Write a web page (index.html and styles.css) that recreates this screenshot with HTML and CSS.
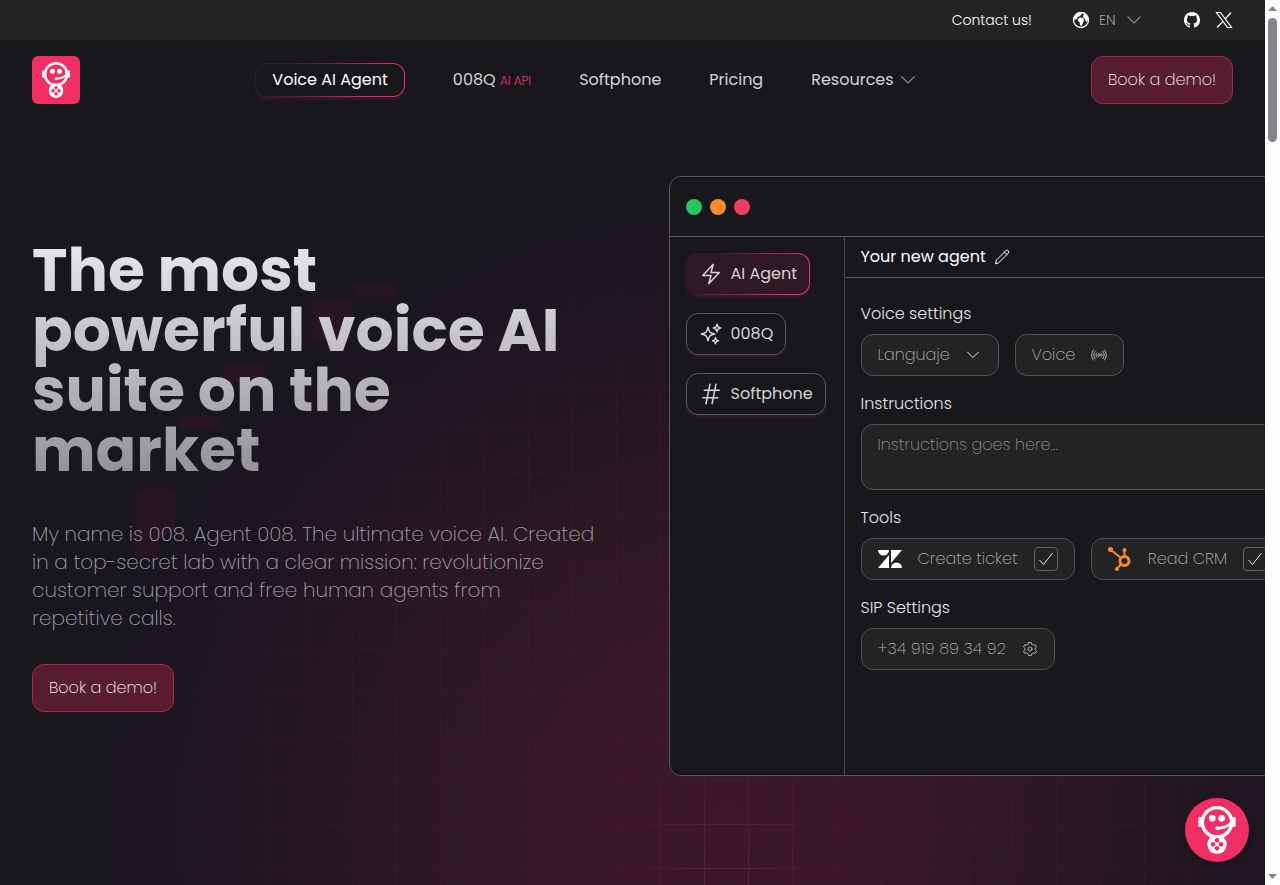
FILE: index.html
```html
<!DOCTYPE html>
<html lang="en">
<head>
  <meta charset="UTF-8">
  <meta name="viewport" content="width=device-width, initial-scale=1">
  <title>008 - Voice AI Agent</title>
  <link rel="stylesheet" href="styles.css">
</head>
<body>

  <!-- mascot, used in the logo and in the chat button -->
  <svg class="defs" width="0" height="0" aria-hidden="true">
    <symbol id="mascot" viewBox="0 0 192 192">
      <g fill="#fff">
        <rect x="40" y="58" width="14" height="28" rx="3"/>
        <rect x="138" y="58" width="14" height="28" rx="3"/>
        <circle cx="82" cy="61" r="10"/>
        <circle cx="110" cy="61" r="10"/>
        <circle cx="97" cy="91" r="6"/>
        <rect x="82" y="112" width="28" height="14"/>
        <circle cx="96" cy="139" r="29"/>
      </g>
      <circle cx="96" cy="73" r="44" fill="none" stroke="#fff" stroke-width="10"/>
      <path d="M139 75C130 84 115 90 97 91" fill="none" stroke="#fff" stroke-width="8"/>
      <g fill="#f22f65">
        <circle cx="96" cy="127" r="7"/>
        <circle cx="96" cy="151" r="7"/>
        <circle cx="84" cy="139" r="7"/>
        <circle cx="108" cy="139" r="7"/>
      </g>
    </symbol>
    <symbol id="chevron" viewBox="0 0 16 16">
      <path d="M1.500 4.500 8 11l6.500-6.500" fill="none" stroke="currentColor" stroke-width="1.200"/>
    </symbol>
  </svg>

  <div class="topbar">
    <a href="#contact" class="contact">Contact us!</a>
    <div class="lang">
      <svg width="18" height="18" viewBox="0 0 18 18">
        <circle cx="9" cy="9" r="7.500" fill="none" stroke="#fff" stroke-width="1.300"/>
        <path d="M2 6.500 4 3l4-1.500 2 .5-.5 1.500-1.500 1.500-2 1-1.500 2-2 1zM6 8l2-1.500 3 .5 1 2-1 3-1.500 3-1.500-1-.5-3-1.500-1zM12 3l3 2 1 3-1 3-1.500-1-.5-2-1.500-1-.5-2z" fill="#fff"/>
      </svg>
      <select class="lang-select" aria-label="Language"><option>EN</option></select>
      <svg class="muted" width="16" height="16"><use href="#chevron"/></svg>
    </div>
    <div class="social">
      <a href="#github" aria-label="GitHub">
        <svg width="16" height="16" viewBox="0 0 16 16" fill="#fff"><path d="M8 0C3.580 0 0 3.580 0 8c0 3.540 2.290 6.530 5.470 7.590.4.070.55-.17.55-.38 0-.19-.01-.82-.01-1.490-2.010.37-2.530-.49-2.690-.94-.09-.23-.48-.94-.82-1.130-.28-.15-.68-.52-.01-.53.63-.01 1.080.58 1.230.82.72 1.210 1.870.87 2.330.66.070-.52.280-.87.510-1.070-1.780-.2-3.640-.89-3.640-3.950 0-.87.310-1.590.82-2.150-.08-.2-.36-1.020.080-2.120 0 0 .67-.21 2.200.82a7.600 7.600 0 0 1 4 0c1.530-1.040 2.200-.82 2.200-.82.44 1.100.16 1.920.080 2.120.51.56.82 1.270.82 2.150 0 3.070-1.870 3.750-3.650 3.950.29.25.54.73.54 1.480 0 1.070-.01 1.930-.01 2.200 0 .21.15.46.55.38A8 8 0 0 0 16 8c0-4.420-3.580-8-8-8z"/></svg>
      </a>
      <a href="#x" aria-label="X">
        <svg width="18" height="18" viewBox="0 0 18 18" fill="none" stroke="#fff" stroke-width="1.200"><path d="M1.500 1.500h4l11 15h-4zM16 1.500 10.200 8M8 10.400 2 16.500"/></svg>
      </a>
    </div>
  </div>

  <header class="header">
    <a href="#home" class="logo" aria-label="Home"><svg width="48" height="48"><use href="#mascot"/></svg></a>
    <nav class="nav">
      <a href="#agent" class="active">Voice AI Agent</a>
      <a href="#008q">008Q <small>AI API</small></a>
      <a href="#softphone">Softphone</a>
      <a href="#pricing">Pricing</a>
      <button type="button">Resources <svg class="muted" width="16" height="16"><use href="#chevron"/></svg></button>
    </nav>
    <button type="button" class="btn">Book a demo!</button>
  </header>

  <main class="hero">
    <svg class="hero-blocks" width="440" height="600" aria-hidden="true">
      <path d="M355 164q20-3 40 1v11h-40zM312 180h40v40h-40zM223 243h40v20h-40zM179 297h40v11h-40zM135 370q20-3 40 0v40q-12 5-16 12 0 8 3 15h-27z"/>
    </svg>

    <div class="hero-text">
      <h1>The most powerful voice AI suite on the market</h1>
      <p>My name is 008. Agent 008. The ultimate voice AI. Created in a top-secret lab with a clear mission: revolutionize customer support and free human agents from repetitive calls.</p>
      <button type="button" class="btn">Book a demo!</button>
    </div>

    <div class="window">
      <div class="window-bar">
        <span class="dot green"></span>
        <span class="dot orange"></span>
        <span class="dot red"></span>
      </div>
      <div class="window-body">
        <div class="sidebar">
          <button type="button" class="tab selected">
            <svg class="icon" width="24" height="24" viewBox="0 0 24 24"><path d="m3.750 13.500 10.500-11.250L12 10.500h8.250L9.750 21.750 12 13.500z"/></svg>
            AI Agent
          </button>
          <button type="button" class="tab">
            <svg class="icon" width="24" height="24" viewBox="0 0 24 24"><path d="M9.813 15.904 9 18.750l-.813-2.846a4.500 4.500 0 0 0-3.090-3.090L2.250 12l2.846-.813a4.500 4.500 0 0 0 3.090-3.090L9 5.250l.813 2.846a4.500 4.500 0 0 0 3.090 3.090L15.750 12l-2.846.813a4.500 4.500 0 0 0-3.090 3.090ZM18.259 8.715 18 9.750l-.259-1.035a3.375 3.375 0 0 0-2.455-2.456L14.250 6l1.036-.259a3.375 3.375 0 0 0 2.455-2.456L18 2.250l.259 1.035a3.375 3.375 0 0 0 2.456 2.456L21.750 6l-1.035.259a3.375 3.375 0 0 0-2.456 2.456ZM16.894 20.567 16.500 21.750l-.394-1.183a2.250 2.250 0 0 0-1.423-1.423L13.500 18.750l1.183-.394a2.250 2.250 0 0 0 1.423-1.423l.394-1.183.394 1.183a2.250 2.250 0 0 0 1.423 1.423l1.183.394-1.183.394a2.250 2.250 0 0 0-1.423 1.423Z"/></svg>
            008Q
          </button>
          <button type="button" class="tab">
            <svg class="icon" width="24" height="24" viewBox="0 0 24 24"><path d="M5.250 8.250h15m-16.500 7.500h15m-1.800-13.500-3.900 19.500m-2.100-19.500-3.900 19.500"/></svg>
            Softphone
          </button>
        </div>

        <div class="panel">
          <div class="panel-title">
            Your new agent
            <svg class="icon" width="16" height="16" viewBox="0 0 16 16"><path d="M1.500 14.500 2.500 11 11.800 1.700a1.400 1.400 0 0 1 2.500 2.500L5 13.500zM10.500 3l2.500 2.500"/></svg>
          </div>
          <form class="settings">
            <label for="language">Voice settings</label>
            <div class="row">
              <div class="field select-field">
                <select id="language"><option>Languaje</option></select>
                <svg width="14" height="14"><use href="#chevron"/></svg>
              </div>
              <button type="button" class="field">Voice
                <svg class="icon" width="16" height="16" viewBox="0 0 16 16"><circle cx="8" cy="8" r="1.200"/><path d="M5.800 5.800a3 3 0 0 0 0 4.400M10.200 5.800a3 3 0 0 1 0 4.400M4.200 4.200a5.500 5.500 0 0 0 0 7.600M11.800 4.200a5.500 5.500 0 0 1 0 7.600M2.600 2.800a7.500 7.500 0 0 0 0 10.400M13.400 2.800a7.500 7.500 0 0 1 0 10.400"/></svg>
              </button>
            </div>

            <label for="instructions">Instructions</label>
            <textarea id="instructions" placeholder="Instructions goes here..."></textarea>

            <span>Tools</span>
            <div class="row">
              <label class="field">
                <svg width="24" height="18" viewBox="0 0 24 18" fill="#fff"><path d="M0 0h11a5.500 5.500 0 0 1-11 0zM11 5v13H0zM13 13V0h11zM13 18a5.500 5.500 0 0 1 11 0z"/></svg>
                Create ticket
                <span class="check">
                  <input type="checkbox" checked>
                  <svg width="24" height="24" viewBox="0 0 24 24"><path d="m5.500 13 4 4.500L18.500 6"/></svg>
                </span>
              </label>
              <label class="field">
                <svg width="24" height="24" viewBox="0 0 24 24" fill="none" stroke="#f78b2d" stroke-width="2"><circle cx="16.500" cy="14" r="4.500" stroke-width="3"/><path d="M16.500 10V4M13 11 3 3M13.500 17 9 21.500"/><g fill="#f78b2d" stroke="none"><circle cx="2.500" cy="2.500" r="2.500"/><circle cx="16.500" cy="3" r="2"/><circle cx="9" cy="22" r="2"/></g></svg>
                Read CRM
                <span class="check">
                  <input type="checkbox" checked>
                  <svg width="24" height="24" viewBox="0 0 24 24"><path d="m5.500 13 4 4.500L18.500 6"/></svg>
                </span>
              </label>
            </div>

            <span>SIP Settings</span>
            <div class="row">
              <button type="button" class="field">+34 919 89 34 92
                <svg class="icon" width="16" height="16" viewBox="0 0 16 16"><circle cx="8" cy="8" r="2"/><path d="M6.600 1.500h2.800l.4 1.800 1.500.9 1.800-.6 1.400 2.400-1.400 1.300v1.500l1.400 1.300-1.400 2.400-1.800-.600-1.500.9-.4 1.800H6.600l-.4-1.800-1.500-.9-1.800.6-1.400-2.400 1.400-1.300V7.300L1.500 6l1.400-2.400 1.800.6 1.500-.9z"/></svg>
              </button>
            </div>
          </form>
        </div>
      </div>
    </div>
  </main>

  <button type="button" class="chat" aria-label="Call agent"><svg width="64" height="64"><use href="#mascot"/></svg></button>

  <div class="scrollbar" aria-hidden="true">
    <svg width="9" height="5"><path d="M0 5 4.500 0 9 5z"/></svg>
    <span class="thumb"></span>
    <svg width="9" height="5"><path d="M0 0h9L4.500 5z"/></svg>
  </div>

</body>
</html>
```
FILE: styles.css
```css
* {
  box-sizing: border-box;
}

body {
  margin: 0;
  padding-right: 15px;
  min-height: 100vh;
  display: flex;
  flex-direction: column;
  overflow: hidden;
  background: #18171c;
  color: #d4d4d8;
  font-family: Poppins, Inter, sans-serif;
  font-size: 16px;
  line-height: 24px;
}

a {
  color: inherit;
  text-decoration: none;
}

button, select, textarea {
  font: inherit;
  color: inherit;
  background: none;
  border: 0;
  padding: 0;
}

select {
  appearance: none;
}

svg {
  display: block;
  flex-shrink: 0;
}

.defs {
  position: absolute;
}

.muted {
  color: #85858c;
}

.icon {
  fill: none;
  stroke: currentColor;
  stroke-linecap: round;
  stroke-linejoin: round;
}

/* top bar */
.topbar {
  display: flex;
  justify-content: flex-end;
  align-items: center;
  height: 40px;
  padding: 0 32px;
  background: #232324;
  font-size: 14px;
  font-weight: 300;
}

.contact {
  color: #fff;
}

.lang {
  display: flex;
  align-items: center;
  gap: 9px;
  margin: 0 42px 0 40px;
}

.lang-select {
  width: 18px;
  color: #a1a1aa;
}

.social {
  display: flex;
  align-items: center;
  gap: 15px;
}

/* header */
.header {
  display: flex;
  justify-content: space-between;
  align-items: center;
  height: 80px;
  padding: 0 32px;
}

.logo {
  border-radius: 6px;
  background: #f22f65;
}

.nav {
  display: flex;
  align-items: center;
  gap: 48px;
}

.nav button {
  display: flex;
  align-items: center;
  gap: 6px;
}

.nav small {
  color: #e93263;
  font-size: 12px;
  font-weight: 300;
}

.active {
  padding: 4px 16px;
  border: 1px solid transparent;
  border-radius: 12px;
  background: linear-gradient(#18171c, #18171c) padding-box, linear-gradient(120deg, #35182a 20%, #f22f65 85%) border-box;
  box-shadow: 0 3px 5px -2px #541c34;
  color: #fff;
}

.btn {
  height: 48px;
  padding: 0 16px;
  border: 1px solid #a32a4c;
  border-radius: 12px;
  background: #591d31;
  color: #f4f4f5;
  font-weight: 275;
}

/* hero */
.hero {
  position: relative;
  flex: 1;
  display: grid;
  grid-template-columns: minmax(0, 1fr) minmax(0, 1fr);
  gap: 72px;
  align-items: start;
  padding: 56px 32px 109px;
  overflow: hidden;
  background: radial-gradient(ellipse 700px 680px at 730px 700px, #3c1829 0%, #3a1828 20%, #2b1722 50%, #1b1520 82%, #18171c 100%);
}

/* faint grid, strongest near the glow */
.hero::before,
.hero::after {
  content: "";
  position: absolute;
  inset: 0;
  background-image: linear-gradient(#622039 1px, transparent 1px), linear-gradient(90deg, #622039 1px, transparent 1px);
  background-size: 44px 44px;
}

.hero::before {
  opacity: 0.25;
  mask-image: radial-gradient(ellipse 680px 700px at 730px 700px, #000 0%, #000c 60%, transparent 100%);
}

.hero::after {
  mask-image: radial-gradient(ellipse 90px 110px at 726px 745px, #000 0%, transparent 100%);
}

.hero-blocks {
  position: absolute;
  left: 0;
  top: 0;
  fill: #291522;
}

.hero-text {
  position: relative;
  align-self: center;
}

h1 {
  margin: 0 0 40px;
  font-size: 60px;
  line-height: 60px;
  font-weight: 700;
  background: linear-gradient(#e8e8ec, #909096);
  background-clip: text;
  color: transparent;
}

.hero-text p {
  margin: 0 0 32px;
  font-size: 20px;
  line-height: 28px;
  font-weight: 275;
  color: #a1a1aa;
}

/* agent window, runs off the right edge */
.window {
  position: relative;
  z-index: 1;
  display: flex;
  flex-direction: column;
  width: 800px;
  height: 600px;
  border: 1px solid #58585d;
  border-radius: 12px;
  background: #18171c;
}

.window-bar {
  display: flex;
  align-items: center;
  gap: 8px;
  height: 60px;
  padding: 0 16px;
  border-bottom: 1px solid #58585d;
}

.dot {
  width: 16px;
  height: 16px;
  border-radius: 50%;
}

.green { background: #22c55e; }
.orange { background: #f78b2d; }
.red { background: #f23c62; }

.window-body {
  flex: 1;
  display: flex;
}

.sidebar {
  display: flex;
  flex-direction: column;
  align-items: flex-start;
  gap: 18px;
  width: 175px;
  padding: 16px;
  border-right: 1px solid #48484d;
}

.tab {
  display: flex;
  align-items: center;
  gap: 8px;
  height: 42px;
  padding: 0 12px;
  border: 1px solid #58585d;
  border-radius: 12px;
  box-shadow: 0 3px 5px -2px #541c34;
}

.tab .icon {
  stroke-width: 1.5;
}

.selected {
  border-color: transparent;
  background: linear-gradient(#301824, #301824) padding-box, linear-gradient(120deg, #35182a 20%, #f22f65 85%) border-box;
}

.panel {
  flex: 1;
}

.panel-title {
  display: flex;
  align-items: center;
  gap: 8px;
  height: 41px;
  padding: 0 16px;
  border-bottom: 1px solid #58585d;
  color: #fff;
}

.settings {
  display: flex;
  flex-direction: column;
  gap: 8px;
  padding: 24px 16px;
  color: #e4e4e7;
  font-weight: 300;
}

.row {
  display: flex;
  gap: 16px;
  margin-bottom: 8px;
}

.field,
textarea {
  border: 1px solid #525257;
  border-radius: 12px;
  background: #232324;
  color: #b0b0b7;
  font-weight: 275;
}

.field {
  display: flex;
  align-items: center;
  gap: 16px;
  height: 42px;
  padding: 0 16px;
}

.select-field {
  padding-right: 0;
}

.select-field select {
  width: 120px;
  height: 40px;
}

.select-field svg {
  margin-left: -48px;
  margin-right: 18px;
  pointer-events: none;
}

textarea {
  height: 66px;
  margin-bottom: 8px;
  padding: 8px 16px;
  resize: none;
}

textarea::placeholder {
  color: #909098;
}

.check {
  display: grid;
}

.check input,
.check svg {
  grid-area: 1 / 1;
}

.check input {
  appearance: none;
  width: 24px;
  height: 24px;
  margin: 0;
  border: 1px solid #626268;
  border-radius: 4px;
}

.check svg {
  fill: none;
  stroke: #e4e4e7;
  visibility: hidden;
  pointer-events: none;
}

.check input:checked + svg {
  visibility: visible;
}

/* floating button */
.chat {
  position: fixed;
  z-index: 2;
  right: 31px;
  bottom: 23px;
  border-radius: 50%;
  background: #f22f65;
  box-shadow: 0 2px 6px #0006;
}

/* scrollbar */
.scrollbar {
  position: fixed;
  z-index: 2;
  top: 0;
  right: 0;
  bottom: 0;
  width: 15px;
  display: flex;
  flex-direction: column;
  align-items: center;
  padding: 6px 0;
  background: #fcfcfc;
  fill: #85858c;
}

.thumb {
  width: 9px;
  height: 124px;
  margin: 7px 0 auto;
  border-radius: 5px;
  background: #85858c;
}
```
